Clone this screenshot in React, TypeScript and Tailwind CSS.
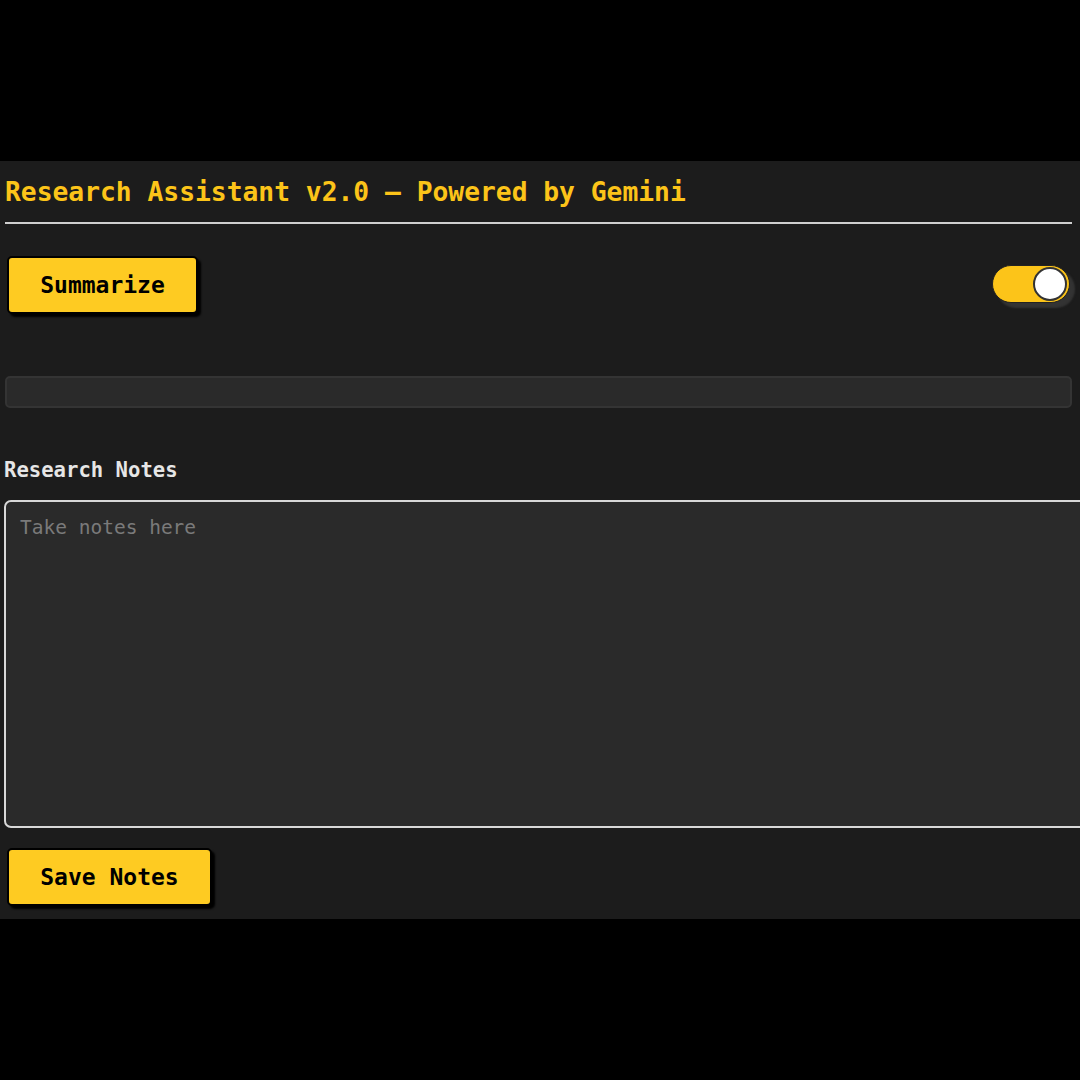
import React, { useState } from 'react';

const mono = "font-['DejaVu_Sans_Mono','Liberation_Mono',monospace]";

const App: React.FC = () => {
  const [on, setOn] = useState(true);

  return (
    <div className={`min-h-screen w-full bg-black overflow-hidden ${mono}`}>
      <div className="mt-[161px] w-[1080px] bg-[#1c1c1c] pb-[13px]">
        {/* Header */}
        <div className="px-[5px] pt-[13px]">
          <h1 className="text-[26.3px] leading-[36px] font-bold text-[#fcc419] whitespace-nowrap">
            Research Assistant v2.0 – Powered by Gemini
          </h1>
          <div className="mt-[12px] mr-[3px] h-[2px] bg-[#cfcfcf]" />
        </div>

        {/* Actions row */}
        <div className="mt-[32px] flex items-start justify-between pl-[7px] pr-[10px]">
          <button className="h-[58px] w-[191px] rounded-[5px] border-2 border-black bg-[#fecb22] text-[23px] font-bold text-black shadow-[3px_3px_2px_#000]">
            Summarize
          </button>
          <button
            onClick={() => setOn(!on)}
            className="relative mt-[9px] h-[38px] w-[78px] rounded-full border border-[#222] bg-[#fcc419] shadow-[5px_5px_2px_#333]"
          >
            <span className="absolute right-[2px] top-[1px] h-[34px] w-[34px] rounded-full border-2 border-[#333] bg-white" />
          </button>
        </div>

        {/* Progress / output bar */}
        <div className="mt-[62px] px-[5px] pr-[8px]">
          <div className="h-[32px] rounded-[5px] border-2 border-[#343434] bg-[#2a2a2a]" />
        </div>

        {/* Notes */}
        <div className="mt-[48px] pl-[4px]">
          <label className="block text-[20.6px] leading-[28px] font-bold text-[#e6e6e6]">Research Notes</label>
          <textarea
            autoFocus
            placeholder="Take notes here"
            className={`mt-[16px] block h-[328px] w-[1090px] resize-none rounded-[7px] border-2 border-[#d8d8d8] bg-[#2a2a2a] px-[14px] py-[12px] text-[19.5px] leading-[28px] text-[#ddd] placeholder:text-[#7a7a7a] outline-none ${mono}`}
          />
        </div>

        <div className="mt-[20px] pl-[7px]">
          <button className="h-[58px] w-[205px] rounded-[5px] border-2 border-black bg-[#fecb22] text-[23px] font-bold text-black shadow-[3px_3px_2px_#000]">
            Save Notes
          </button>
        </div>
      </div>
    </div>
  );
};

export default App;
